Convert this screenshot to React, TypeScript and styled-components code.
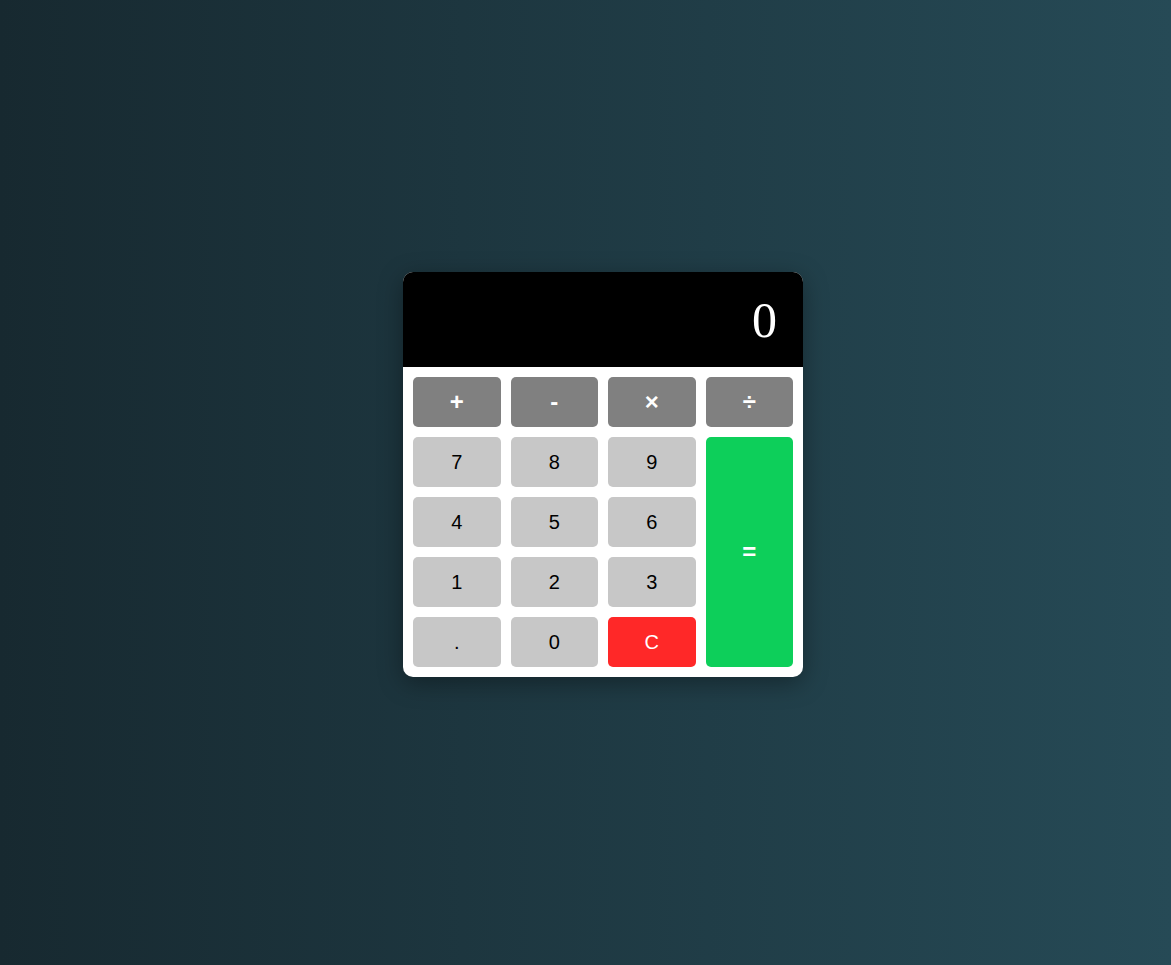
import styled, { createGlobalStyle } from "styled-components";

const GlobalStyle = createGlobalStyle`
  html, body {
    margin: 0;
    padding: 0;
  }
  body {
    font-family: "Liberation Sans", Arial, sans-serif;
    background: linear-gradient(to right, #172930, #264a56);
    min-height: 100vh;
  }
`;

const Page = styled.div`
  min-height: calc(100vh - 16px);
  display: flex;
  align-items: center;
  justify-content: center;
  padding-left: 35px;
`;

const Calculator = styled.div`
  width: 400px;
  background: #ffffff;
  border-radius: 10px;
  overflow: hidden;
  box-shadow: 0 6px 24px rgba(0, 0, 0, 0.35);
`;

const Display = styled.div`
  height: 95px;
  background: #000000;
  color: #ffffff;
  display: flex;
  align-items: center;
  justify-content: flex-end;
  padding: 0 26px;
  font-family: "Liberation Serif", "Times New Roman", serif;
  font-size: 50px;
`;

const Keys = styled.div`
  display: grid;
  grid-template-columns: repeat(4, 1fr);
  grid-auto-rows: 50px;
  gap: 10px;
  padding: 10px;
`;

type Kind = "op" | "num" | "clear" | "equals";

const colors: Record<Kind, { bg: string; fg: string }> = {
  op: { bg: "#808080", fg: "#ffffff" },
  num: { bg: "#c7c7c7", fg: "#000000" },
  clear: { bg: "#ff2828", fg: "#ffffff" },
  equals: { bg: "#0dcf5a", fg: "#ffffff" },
};

const Key = styled.button<{ $kind: Kind }>`
  border: none;
  border-radius: 5px;
  font-family: "Liberation Sans", Arial, sans-serif;
  font-size: ${(p) => (p.$kind === "op" || p.$kind === "equals" ? "24px" : "20px")};
  font-weight: ${(p) => (p.$kind === "op" || p.$kind === "equals" ? 700 : 400)};
  background: ${(p) => colors[p.$kind].bg};
  color: ${(p) => colors[p.$kind].fg};
  cursor: pointer;
  padding: 0;
  grid-row: ${(p) => (p.$kind === "equals" ? "2 / span 4" : "auto")};
  grid-column: ${(p) => (p.$kind === "equals" ? "4" : "auto")};
`;

const keys: { label: string; kind: Kind }[] = [
  { label: "+", kind: "op" },
  { label: "-", kind: "op" },
  { label: "×", kind: "op" },
  { label: "÷", kind: "op" },
  { label: "7", kind: "num" },
  { label: "8", kind: "num" },
  { label: "9", kind: "num" },
  { label: "=", kind: "equals" },
  { label: "4", kind: "num" },
  { label: "5", kind: "num" },
  { label: "6", kind: "num" },
  { label: "1", kind: "num" },
  { label: "2", kind: "num" },
  { label: "3", kind: "num" },
  { label: ".", kind: "num" },
  { label: "0", kind: "num" },
  { label: "C", kind: "clear" },
];

export default function App() {
  return (
    <>
      <GlobalStyle />
      <Page>
        <Calculator>
          <Display>0</Display>
          <Keys>
            {keys.map((k) => (
              <Key key={k.label} $kind={k.kind}>
                {k.label}
              </Key>
            ))}
          </Keys>
        </Calculator>
      </Page>
    </>
  );
}
